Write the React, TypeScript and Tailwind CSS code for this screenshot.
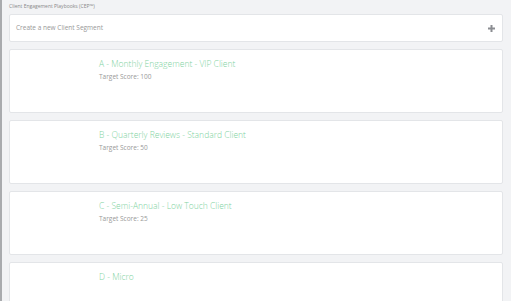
const segments = [
  { name: "A - Monthly Engagement - VIP Client", score: 100 },
  { name: "B - Quarterly Reviews - Standard Client", score: 50 },
  { name: "C - Semi-Annual - Low Touch Client", score: 25 },
  { name: "D - Micro", score: null },
];

function SegmentCard({ name, score }: { name: string; score: number | null }) {
  return (
    <div className="h-[64px] shrink-0 rounded-[2px] border border-[#e3e5e8] bg-white pl-[89px] pt-[8px]">
      <div className="text-[8.5px] font-light leading-[12px] text-[#7fd3a2]">{name}</div>
      {score !== null && (
        <div className="mt-[2px] text-[6.5px] leading-[9px] text-[#999]">
          Target Score: {score}
        </div>
      )}
    </div>
  );
}

export default function App() {
  return (
    <div
      className="flex h-[301px] overflow-hidden border-l-2 border-[#a9abae] bg-[#f2f3f5]"
      style={{ fontFamily: '"Open Sans", sans-serif' }}
    >
      <div className="flex w-full flex-col pl-[7px] pr-[8px]">
        <div className="pt-[3px] text-[5px] leading-[7px] text-[#888]">
          Client Engagement Playbooks (CEP™)
        </div>
        <div className="mt-[4px] flex h-[28px] shrink-0 items-center justify-between rounded-[2px] border border-[#e3e5e8] bg-white pl-[6px] pr-[7px]">
          <span className="text-[6.5px] text-[#999]">Create a new Client Segment</span>
          <svg width="7" height="7" viewBox="0 0 7 7" className="mt-[1px]">
            <rect x="2.5" y="0" width="2" height="7" fill="#8b8d92" />
            <rect x="0" y="2.5" width="7" height="2" fill="#8b8d92" />
          </svg>
        </div>
        <div className="mt-[7px] flex flex-col gap-[7px]">
          {segments.map((s) => (
            <SegmentCard key={s.name} name={s.name} score={s.score} />
          ))}
        </div>
      </div>
    </div>
  );
}
